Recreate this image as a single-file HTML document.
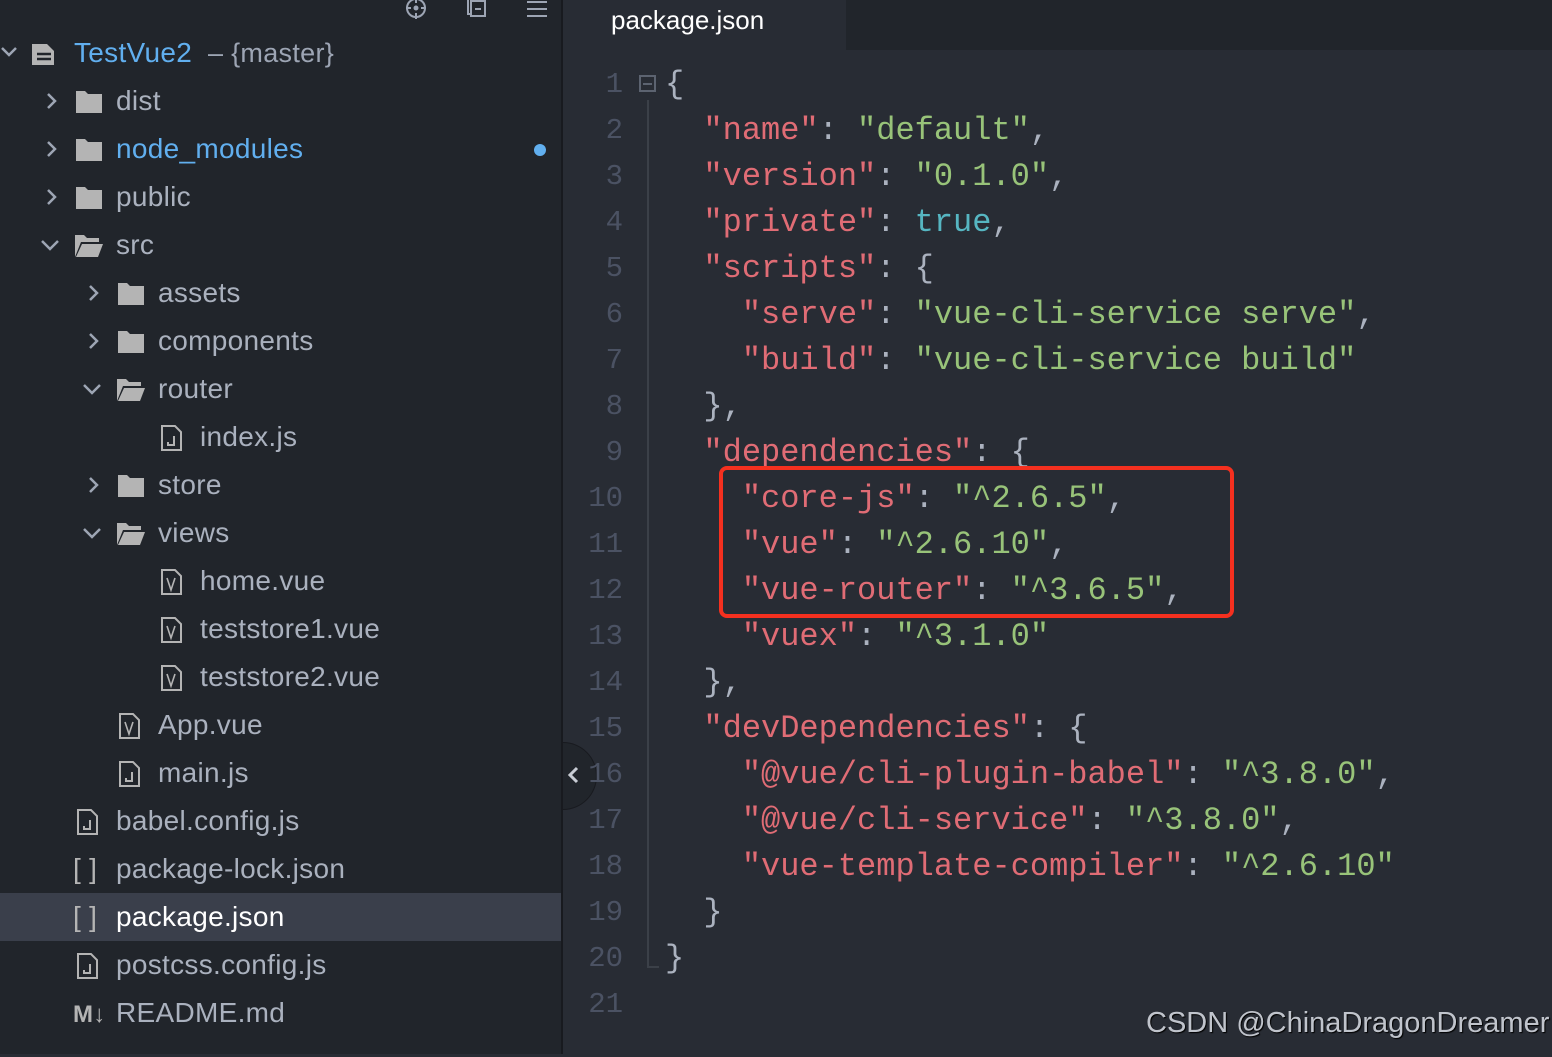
<!DOCTYPE html>
<html><head><meta charset="utf-8"><style>
*{margin:0;padding:0;box-sizing:border-box}
body{width:1552px;height:1054px;background:#282c34;position:relative;overflow:hidden;font-family:"Liberation Sans",sans-serif}
#side{position:absolute;left:0;top:0;width:563px;height:1054px;background:#21252b;border-right:2px solid #181a1f}
.row{position:absolute;left:0;width:561px;height:48px}
.row.sel{background:#3a3f4b}
.t{position:absolute;top:8px;font-size:28px;color:#aab1be;white-space:nowrap;line-height:32px;letter-spacing:0.3px}
.sel .t{color:#fff}
.ic{position:absolute;top:12px}
.ch{position:absolute;top:14px}
#tabbar{position:absolute;left:565px;top:0;width:987px;height:50px;background:#21252b}
#tab{position:absolute;left:565px;top:0;width:281px;height:50px;background:#282c34}
#tab span{position:absolute;left:46px;top:5px;font-size:26px;color:#fff}
.ln{position:absolute;left:565px;width:58px;text-align:right;font-family:"Liberation Mono",monospace;font-size:29px;color:#4b5263;height:46px;line-height:46px}
.cl{position:absolute;left:665px;font-family:"Liberation Mono",monospace;font-size:32px;color:#abb2bf;white-space:pre;height:46px;line-height:46px}
.k{color:#e06c75}.s{color:#98c379}.b{color:#56b6c2}
</style></head><body>
<div id="side">
<svg style="position:absolute;left:404px;top:0" width="24" height="20" viewBox="0 0 24 20"><circle cx="12" cy="8" r="9" fill="none" stroke="#9da5b4" stroke-width="2"/><circle cx="12" cy="8" r="2.5" fill="#9da5b4"/><path d="M12 -2v5M12 13v6M2 8h5M17 8h5" stroke="#9da5b4" stroke-width="2"/></svg>
<svg style="position:absolute;left:466px;top:0" width="22" height="18"><path d="M2 0v14h3" fill="none" stroke="#9da5b4" stroke-width="2"/><rect x="5" y="1" width="14" height="15" fill="none" stroke="#9da5b4" stroke-width="2"/><path d="M9 9h6" stroke="#9da5b4" stroke-width="2"/></svg>
<svg style="position:absolute;left:526px;top:0" width="22" height="18"><path d="M1 2h20M1 9h20M1 16h20" stroke="#9da5b4" stroke-width="2"/></svg>

<div class="row" style="top:29px"><svg class="ch" style="left:0" width="18" height="18"><path d="M2 5l7 7 7-7" fill="none" stroke="#9da5b4" stroke-width="2.5"/></svg><svg class="ic" style="left:30px;top:13px" width="28" height="24"><path d="M2 2h15l7 7v14H2z" fill="#b4b4b4"/><path d="M7 12h14M7 17h14" stroke="#21252b" stroke-width="2.5"/></svg><span class="t" style="left:74px;color:#61afef">TestVue2 <span style="color:#9da5b4;font-size:27px">&nbsp;– {master}</span></span></div>

<div class="row" style="top:77px"><svg class="ch" style="left:42px" width="20" height="20"><path d="M6 3l7 7-7 7" fill="none" stroke="#9da5b4" stroke-width="2.5"/></svg><svg class="ic" style="left:75px;top:14px" width="28" height="22"><path d="M1 0h9l3 3h14v19H1z" fill="#b4b4b4"/></svg><span class="t" style="left:116px">dist</span></div>
<div class="row" style="top:125px"><svg class="ch" style="left:42px" width="20" height="20"><path d="M6 3l7 7-7 7" fill="none" stroke="#9da5b4" stroke-width="2.5"/></svg><svg class="ic" style="left:75px;top:14px" width="28" height="22"><path d="M1 0h9l3 3h14v19H1z" fill="#b4b4b4"/></svg><span class="t" style="left:116px;color:#61afef">node_modules</span><div style="position:absolute;left:534px;top:19px;width:12px;height:12px;border-radius:6px;background:#61afef"></div></div>
<div class="row" style="top:173px"><svg class="ch" style="left:42px" width="20" height="20"><path d="M6 3l7 7-7 7" fill="none" stroke="#9da5b4" stroke-width="2.5"/></svg><svg class="ic" style="left:75px;top:14px" width="28" height="22"><path d="M1 0h9l3 3h14v19H1z" fill="#b4b4b4"/></svg><span class="t" style="left:116px">public</span></div>
<div class="row" style="top:221px"><svg class="ch" style="left:40px" width="20" height="20"><path d="M2 6l8 8 8-8" fill="none" stroke="#9da5b4" stroke-width="2.5"/></svg><svg class="ic" style="left:74px;top:13px" width="30" height="24"><path d="M1 1h9l3 3h12v4H7L1 23z" fill="#b4b4b4"/><path d="M8 10h21l-5 13H2z" fill="#b4b4b4"/></svg><span class="t" style="left:116px">src</span></div>

<div class="row" style="top:269px"><svg class="ch" style="left:84px" width="20" height="20"><path d="M6 3l7 7-7 7" fill="none" stroke="#9da5b4" stroke-width="2.5"/></svg><svg class="ic" style="left:117px;top:14px" width="28" height="22"><path d="M1 0h9l3 3h14v19H1z" fill="#b4b4b4"/></svg><span class="t" style="left:158px">assets</span></div>
<div class="row" style="top:317px"><svg class="ch" style="left:84px" width="20" height="20"><path d="M6 3l7 7-7 7" fill="none" stroke="#9da5b4" stroke-width="2.5"/></svg><svg class="ic" style="left:117px;top:14px" width="28" height="22"><path d="M1 0h9l3 3h14v19H1z" fill="#b4b4b4"/></svg><span class="t" style="left:158px">components</span></div>
<div class="row" style="top:365px"><svg class="ch" style="left:82px" width="20" height="20"><path d="M2 6l8 8 8-8" fill="none" stroke="#9da5b4" stroke-width="2.5"/></svg><svg class="ic" style="left:116px;top:13px" width="30" height="24"><path d="M1 1h9l3 3h12v4H7L1 23z" fill="#b4b4b4"/><path d="M8 10h21l-5 13H2z" fill="#b4b4b4"/></svg><span class="t" style="left:158px">router</span></div>
<div class="row" style="top:413px"><svg class="ic" style="left:161px;top:12px" width="22" height="26"><path d="M1 1h13l6 6v18H1z" fill="none" stroke="#b4b4b4" stroke-width="2"/><path d="M13 11v9h-6v-3" fill="none" stroke="#b4b4b4" stroke-width="2"/></svg><span class="t" style="left:200px">index.js</span></div>
<div class="row" style="top:461px"><svg class="ch" style="left:84px" width="20" height="20"><path d="M6 3l7 7-7 7" fill="none" stroke="#9da5b4" stroke-width="2.5"/></svg><svg class="ic" style="left:117px;top:14px" width="28" height="22"><path d="M1 0h9l3 3h14v19H1z" fill="#b4b4b4"/></svg><span class="t" style="left:158px">store</span></div>
<div class="row" style="top:509px"><svg class="ch" style="left:82px" width="20" height="20"><path d="M2 6l8 8 8-8" fill="none" stroke="#9da5b4" stroke-width="2.5"/></svg><svg class="ic" style="left:116px;top:13px" width="30" height="24"><path d="M1 1h9l3 3h12v4H7L1 23z" fill="#b4b4b4"/><path d="M8 10h21l-5 13H2z" fill="#b4b4b4"/></svg><span class="t" style="left:158px">views</span></div>
<div class="row" style="top:557px"><svg class="ic" style="left:161px;top:12px" width="22" height="26"><path d="M1 1h13l6 6v18H1z" fill="none" stroke="#b4b4b4" stroke-width="2"/><path d="M6 9l4 12 4-12" fill="none" stroke="#b4b4b4" stroke-width="1.6"/></svg><span class="t" style="left:200px">home.vue</span></div>
<div class="row" style="top:605px"><svg class="ic" style="left:161px;top:12px" width="22" height="26"><path d="M1 1h13l6 6v18H1z" fill="none" stroke="#b4b4b4" stroke-width="2"/><path d="M6 9l4 12 4-12" fill="none" stroke="#b4b4b4" stroke-width="1.6"/></svg><span class="t" style="left:200px">teststore1.vue</span></div>
<div class="row" style="top:653px"><svg class="ic" style="left:161px;top:12px" width="22" height="26"><path d="M1 1h13l6 6v18H1z" fill="none" stroke="#b4b4b4" stroke-width="2"/><path d="M6 9l4 12 4-12" fill="none" stroke="#b4b4b4" stroke-width="1.6"/></svg><span class="t" style="left:200px">teststore2.vue</span></div>
<div class="row" style="top:701px"><svg class="ic" style="left:119px;top:12px" width="22" height="26"><path d="M1 1h13l6 6v18H1z" fill="none" stroke="#b4b4b4" stroke-width="2"/><path d="M6 9l4 12 4-12" fill="none" stroke="#b4b4b4" stroke-width="1.6"/></svg><span class="t" style="left:158px">App.vue</span></div>
<div class="row" style="top:749px"><svg class="ic" style="left:119px;top:12px" width="22" height="26"><path d="M1 1h13l6 6v18H1z" fill="none" stroke="#b4b4b4" stroke-width="2"/><path d="M13 11v9h-6v-3" fill="none" stroke="#b4b4b4" stroke-width="2"/></svg><span class="t" style="left:158px">main.js</span></div>
<div class="row" style="top:797px"><svg class="ic" style="left:77px;top:12px" width="22" height="26"><path d="M1 1h13l6 6v18H1z" fill="none" stroke="#b4b4b4" stroke-width="2"/><path d="M13 11v9h-6v-3" fill="none" stroke="#b4b4b4" stroke-width="2"/></svg><span class="t" style="left:116px">babel.config.js</span></div>
<div class="row" style="top:845px"><span class="t" style="left:73px;color:#b4b4b4">[ ]</span><span class="t" style="left:116px">package-lock.json</span></div>
<div class="row sel" style="top:893px"><span class="t" style="left:73px;color:#b4b4b4">[ ]</span><span class="t" style="left:116px">package.json</span></div>
<div class="row" style="top:941px"><svg class="ic" style="left:77px;top:12px" width="22" height="26"><path d="M1 1h13l6 6v18H1z" fill="none" stroke="#b4b4b4" stroke-width="2"/><path d="M13 11v9h-6v-3" fill="none" stroke="#b4b4b4" stroke-width="2"/></svg><span class="t" style="left:116px">postcss.config.js</span></div>
<div class="row" style="top:989px"><span class="t" style="left:73px;color:#b4b4b4;font-weight:bold;font-size:24px;top:10px">M↓</span><span class="t" style="left:116px">README.md</span></div>
</div>

<div id="tabbar"></div>
<div id="tab"><span>package.json</span></div>

<div style="position:absolute;left:563px;top:742px;width:34px;height:68px;border-radius:0 34px 34px 0;background:#21252b;border:1px solid #181a1f;border-left:none"></div>
<svg style="position:absolute;left:565px;top:765px" width="16" height="20"><path d="M12 3l-7 7 7 7" fill="none" stroke="#c8ccd4" stroke-width="3"/></svg>

<svg style="position:absolute;left:639px;top:75px" width="18" height="18"><rect x="1" y="1" width="15" height="15" fill="none" stroke="#5c6370" stroke-width="2"/><path d="M4 9h9" stroke="#5c6370" stroke-width="2"/></svg>
<div style="position:absolute;left:647px;top:100px;width:2px;height:868px;background:#3b4048"></div>
<div style="position:absolute;left:647px;top:966px;width:12px;height:2px;background:#3b4048"></div>

<div style="position:absolute;left:0;top:3px;width:1552px;height:1054px">
<div class="ln" style="top:59px">1</div><div class="cl" style="top:59px">{</div>
<div class="ln" style="top:105px">2</div><div class="cl" style="top:105px">  <span class="k">"name"</span>: <span class="s">"default"</span>,</div>
<div class="ln" style="top:151px">3</div><div class="cl" style="top:151px">  <span class="k">"version"</span>: <span class="s">"0.1.0"</span>,</div>
<div class="ln" style="top:197px">4</div><div class="cl" style="top:197px">  <span class="k">"private"</span>: <span class="b">true</span>,</div>
<div class="ln" style="top:243px">5</div><div class="cl" style="top:243px">  <span class="k">"scripts"</span>: {</div>
<div class="ln" style="top:289px">6</div><div class="cl" style="top:289px">    <span class="k">"serve"</span>: <span class="s">"vue-cli-service serve"</span>,</div>
<div class="ln" style="top:335px">7</div><div class="cl" style="top:335px">    <span class="k">"build"</span>: <span class="s">"vue-cli-service build"</span></div>
<div class="ln" style="top:381px">8</div><div class="cl" style="top:381px">  },</div>
<div class="ln" style="top:427px">9</div><div class="cl" style="top:427px">  <span class="k">"dependencies"</span>: {</div>
<div class="ln" style="top:473px">10</div><div class="cl" style="top:473px">    <span class="k">"core-js"</span>: <span class="s">"^2.6.5"</span>,</div>
<div class="ln" style="top:519px">11</div><div class="cl" style="top:519px">    <span class="k">"vue"</span>: <span class="s">"^2.6.10"</span>,</div>
<div class="ln" style="top:565px">12</div><div class="cl" style="top:565px">    <span class="k">"vue-router"</span>: <span class="s">"^3.6.5"</span>,</div>
<div class="ln" style="top:611px">13</div><div class="cl" style="top:611px">    <span class="k">"vuex"</span>: <span class="s">"^3.1.0"</span></div>
<div class="ln" style="top:657px">14</div><div class="cl" style="top:657px">  },</div>
<div class="ln" style="top:703px">15</div><div class="cl" style="top:703px">  <span class="k">"devDependencies"</span>: {</div>
<div class="ln" style="top:749px">16</div><div class="cl" style="top:749px">    <span class="k">"@vue/cli-plugin-babel"</span>: <span class="s">"^3.8.0"</span>,</div>
<div class="ln" style="top:795px">17</div><div class="cl" style="top:795px">    <span class="k">"@vue/cli-service"</span>: <span class="s">"^3.8.0"</span>,</div>
<div class="ln" style="top:841px">18</div><div class="cl" style="top:841px">    <span class="k">"vue-template-compiler"</span>: <span class="s">"^2.6.10"</span></div>
<div class="ln" style="top:887px">19</div><div class="cl" style="top:887px">  }</div>
<div class="ln" style="top:933px">20</div><div class="cl" style="top:933px">}</div>
<div class="ln" style="top:979px">21</div>
</div>

<div style="position:absolute;left:719px;top:466px;width:515px;height:152px;border:4px solid #f5301f;border-radius:8px"></div>

<div style="position:absolute;left:1146px;top:1007px;font-size:29px;color:#c0c4cc;white-space:nowrap;text-shadow:1px 1px 1px #000">CSDN @ChinaDragonDreamer</div>
</body></html>
